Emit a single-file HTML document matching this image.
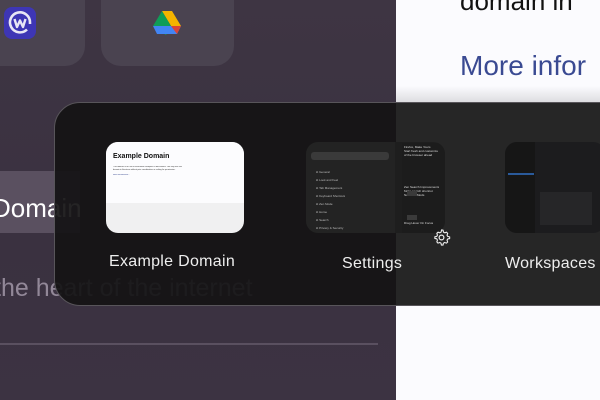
<!DOCTYPE html>
<html><head><meta charset="utf-8"><style>
*{margin:0;padding:0;box-sizing:border-box}
body{width:600px;height:400px;overflow:hidden;position:relative;background:#3d3442;font-family:"Liberation Sans",sans-serif}
.a{position:absolute}
.t{font-size:2px;line-height:3px;color:#aaa;white-space:nowrap;overflow:hidden}
</style></head><body>
<div class="a" style="left:0;top:0;width:396px;height:400px;background:linear-gradient(180deg,#3e3543,#3a3140 60%,#3c3342)"></div>
<div class="a" style="left:-40px;top:-30px;width:125px;height:96px;border-radius:20px;background:#4a4350"></div>
<div class="a" style="left:101px;top:-30px;width:133px;height:96px;border-radius:20px;background:#4a4350"></div>
<div class="a" style="left:4px;top:7px;width:32px;height:32px;border-radius:8px;background:#3e36b5"></div>
<svg class="a" style="left:4px;top:7px" width="32" height="32" viewBox="0 0 32 32"><path d="M23 22.5 A10 10 0 1 1 26 15.5 L26 17" fill="none" stroke="#e8e6f5" stroke-width="2.6"/><path d="M10.5 12 L13 20 L16 13.5 L19 20 L21.5 12" fill="none" stroke="#e8e6f5" stroke-width="2.4" stroke-linejoin="round"/></svg>
<svg class="a" style="left:152px;top:9px" width="30" height="28" viewBox="0 0 30 28"><path d="M10 2h10l9 15h-10z" fill="#f4b400"/><path d="M10 2l9 15-5 9L1 17z" fill="#0f9d58"/><path d="M1 17l4 8h20l4-8z" fill="#4285f4"/><path d="M19 17h10l-4 8z" fill="#db4437"/></svg>
<div class="a" style="left:0;top:171px;width:80px;height:62px;background:#5a5060"></div>
<div class="a" style="left:-8px;top:193px;font-size:26px;color:#fff">Domain</div>
<div class="a" style="left:-6px;top:274px;font-size:25px;color:#928898">the heart of the internet</div>
<div class="a" style="left:0;top:343px;width:378px;height:2px;background:#5a5060"></div>
<div class="a" style="left:396px;top:0;width:204px;height:400px;background:#fbfbfe"></div>
<div class="a" style="left:460px;top:-14px;font-size:26px;color:#111">domain in</div>
<div class="a" style="left:460px;top:50px;font-size:28px;color:#3a4a92">More infor</div>
<div class="a" style="left:396px;top:86px;width:204px;height:17px;background:linear-gradient(#fbfbfe,#dcdcdf)"></div>
<div class="a" style="left:54px;top:102px;width:580px;height:204px;border-radius:26px;border:1.5px solid #58555a;overflow:hidden;background:rgba(20,19,20,0.93)">
  <div class="a" style="left:341px;top:0;width:300px;height:210px;background:#262626"></div>
</div>
<div class="a" style="left:106px;top:142px;width:138px;height:91px;border-radius:12px;overflow:hidden;background:#f0f0f1">
  <div class="a" style="left:0;top:0;width:138px;height:61px;background:#fcfcfe"></div>
  <div class="a" style="left:7px;top:11px;font-size:7px;font-weight:bold;color:#111">Example Domain</div>
  <div class="a t" style="left:7px;top:24px;color:#333">This domain is for use in illustrative examples in documents. You may use this<br>domain in literature without prior coordination or asking for permission.</div>
  <div class="a t" style="left:7px;top:32px;color:#3a4a92">More information...</div>
</div>
<div class="a" style="left:109px;top:253px;font-size:16px;color:#eee;letter-spacing:.3px">Example Domain</div>
<div class="a" style="left:306px;top:142px;width:139px;height:91px;border-radius:12px;overflow:hidden;background:#1e1e1e">
  <div class="a" style="left:0;top:0;width:89px;height:91px;background:#232323"></div>
  <div class="a" style="left:5px;top:10px;width:78px;height:8px;border-radius:3px;background:#3a3a3a"></div>
  <div class="a t" style="left:10px;top:26px;line-height:8px;font-size:3px;color:#bbb">Ω General<br>Ω Look and Feel<br>Ω Tab Management<br>Ω Keyboard Shortcuts<br>Ω Zen Mode<br>Ω Home<br>Ω Search<br>Ω Privacy & Security</div>
  <div class="a" style="left:96px;top:1px;width:43px;height:90px;background:#1c1c1c"></div>
  <div class="a t" style="left:98px;top:3px;font-size:3px;line-height:4px;color:#ddd">Firefox, Make Yours<br>Start fresh and customize<br>of the browser ahead<br><br><br><br><br><br><br><br>Zen Search Improvements<br>Make search shortcut<br>Now with Mods<br><br><br><br><br><br><br>Drag Hover On Focus</div>
  <div class="a" style="left:101px;top:49px;width:10px;height:5px;background:#3a3a3a"></div>
  <div class="a" style="left:101px;top:73px;width:10px;height:5px;background:#3a3a3a"></div>
</div>
<svg class="a" style="left:432px;top:228px" width="19" height="19" viewBox="0 0 24 24"><path d="M12 2.5l2 .3.5 2.4 1.6.9 2.3-.8 1.4 1.5-.8 2.3.9 1.6 2.4.5v2.1l-2.4.5-.9 1.6.8 2.3-1.5 1.4-2.3-.8-1.6.9-.5 2.4h-2l-.5-2.4-1.6-.9-2.3.8-1.4-1.5.8-2.3-.9-1.6-2.4-.5v-2.1l2.4-.5.9-1.6-.8-2.3 1.5-1.4 2.3.8 1.6-.9.5-2.4z" fill="none" stroke="#eee" stroke-width="1.4" stroke-linejoin="round"/><circle cx="12" cy="12" r="3" fill="none" stroke="#eee" stroke-width="1.5"/></svg>
<div class="a" style="left:342px;top:255px;font-size:16px;color:#eee;letter-spacing:.3px">Settings</div>
<div class="a" style="left:505px;top:142px;width:100px;height:91px;border-radius:12px;overflow:hidden;background:#1c1c1e">
  <div class="a" style="left:0;top:0;width:30px;height:91px;background:#161616"></div>
  <div class="a" style="left:3px;top:31px;width:26px;height:2px;background:#2a5a9a"></div>
  <div class="a" style="left:35px;top:50px;width:52px;height:33px;background:#262628"></div>
</div>
<div class="a" style="left:505px;top:255px;font-size:16px;color:#eee;letter-spacing:.3px">Workspaces</div>
</body></html>
